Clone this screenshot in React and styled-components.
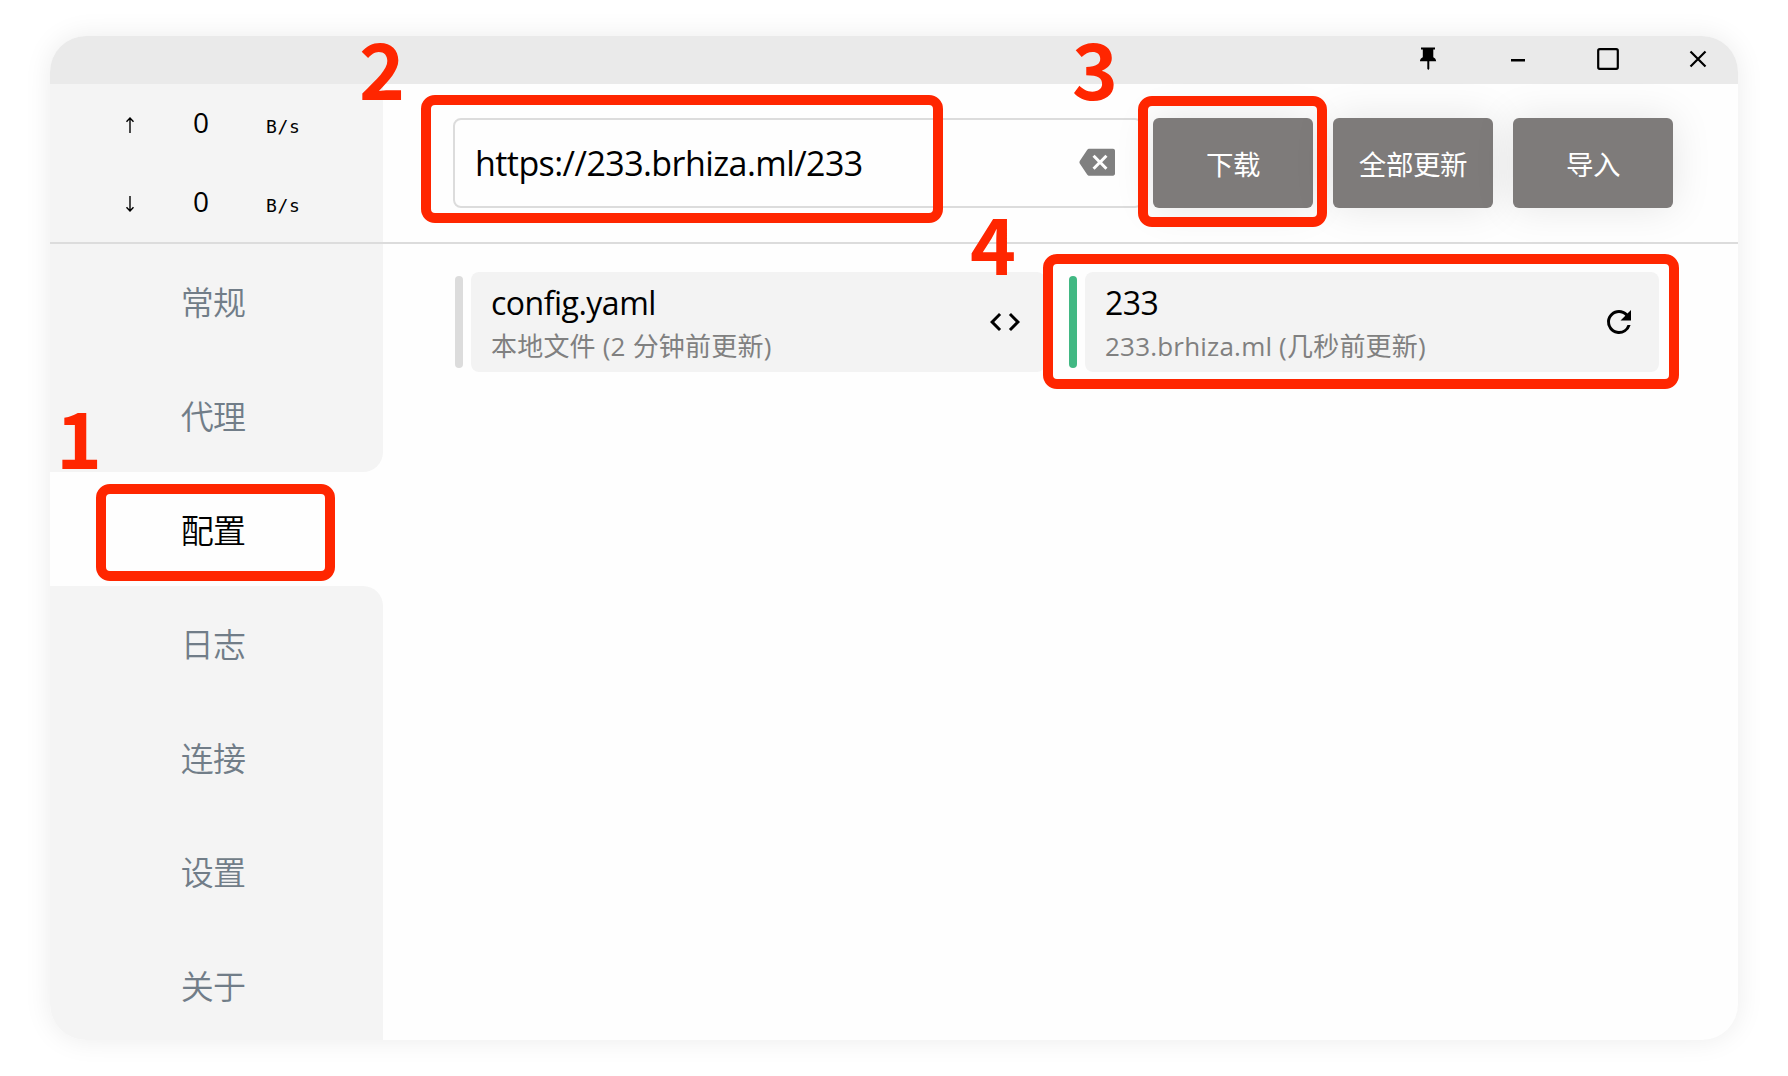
import React from "react";
import styled, { createGlobalStyle, css } from "styled-components";

const sans = `"Open Sans", "Noto Sans CJK SC", sans-serif`;
const mono = `"DejaVu Sans Mono", monospace`;

const GlobalStyle = createGlobalStyle`
  *, *::before, *::after { box-sizing: border-box; }
  html, body { margin: 0; padding: 0; background: #fff; overflow: hidden; }
  button, input { font: inherit; border: 0; padding: 0; }
`;

const Stage = styled.main`
  position: relative;
  width: 1788px;
  height: 1076px;
  padding: 36px 50px;
  background: #fff;
  font-family: ${sans};
  color: #000;
  overflow: hidden;
`;

const Window = styled.section`
  display: flex;
  flex-direction: column;
  width: 1688px;
  height: 1004px;
  border-radius: 36px;
  background: #fefefe;
  overflow: hidden;
  box-shadow: 0 0 28px rgba(0, 0, 0, 0.08);
`;

const TitleBar = styled.header`
  display: flex;
  flex: none;
  justify-content: flex-end;
  gap: 10px;
  height: 48px;
  padding-bottom: 2px;
  background: #eaeaea;
`;

const WindowButton = styled.button`
  display: grid;
  place-items: center;
  width: 80px;
  height: 100%;
  background: none;
`;

const Top = styled.div`
  display: flex;
  flex: none;
  height: 160px;
  border-bottom: 2px solid #dcdcdc;
`;

const Traffic = styled.div`
  display: grid;
  grid-template-rows: 79px 79px;
  width: 333px;
  background: #f4f4f4;
`;

const TrafficRow = styled.div`
  display: grid;
  grid-template-columns: 20px 24px 60px;
  column-gap: 49px;
  align-items: baseline;
  padding: 18px 0 0 70px;
  line-height: 40px;
`;

const Arrow = styled.svg`
  width: 20px;
  height: 16px;
  transform: ${(p) => (p.$down ? "rotate(180deg)" : "none")};
`;

const Amount = styled.span`
  font-size: 28px;
  text-align: center;
`;

const Unit = styled.span`
  padding-left: 4px;
  font-family: ${mono};
  font-size: 18px;
  letter-spacing: 0.7px;
`;

const Toolbar = styled.div`
  display: flex;
  flex: 1;
  gap: 20px;
  padding: 34px 65px 34px 70px;
`;

const UrlField = styled.div`
  display: flex;
  align-items: center;
  width: 690px;
  height: 90px;
  margin-right: -10px;
  padding: 0 26px 0 20px;
  border: 2px solid #dcdcdc;
  border-radius: 8px;
`;

const Url = styled.span`
  flex: 1;
  font-size: 34px;
  letter-spacing: -0.57px;
  white-space: nowrap;
`;

const ActionButton = styled.button`
  flex: none;
  width: 160px;
  height: 90px;
  padding-top: 3px;
  border-radius: 6px;
  background: #7e7b7a;
  color: #fff;
  font-size: 27.5px;
  letter-spacing: -0.4px;
  line-height: 87px;
  box-shadow: 0 0 40px rgba(0, 0, 0, 0.1);
`;

const Body = styled.div`
  display: flex;
  flex: 1;
  min-height: 0;
`;

const Nav = styled.nav`
  display: flex;
  flex-direction: column;
  flex: none;
  width: 333px;
`;

const NavItem = styled.a`
  display: flex;
  flex: none;
  align-items: center;
  justify-content: center;
  height: 114px;
  padding: 0 7px 0 0;
  font-size: 33px;
  letter-spacing: -0.8px;
  font-weight: 350;
  color: #717d88;
  background: #f4f4f4;
  ${(p) => p.$edge === "before" && css`border-bottom-right-radius: 20px;`}
  ${(p) => p.$edge === "after" && css`border-top-right-radius: 20px;`}
  ${(p) =>
    p.$active &&
    css`
      color: #000;
      background: #fefefe;
    `}
`;

const Profiles = styled.div`
  display: grid;
  grid-template-columns: 590px 590px;
  grid-auto-rows: 100px;
  column-gap: 24px;
  padding: 28px 0 0 72px;
`;

const Profile = styled.article`
  display: flex;
  align-items: center;
  gap: 8px;
`;

const Marker = styled.i`
  width: 8px;
  height: 92px;
  border-radius: 4px;
  background: ${(p) => (p.$on ? "#41b883" : "#dcdcdc")};
`;

const Card = styled.div`
  display: flex;
  align-items: center;
  justify-content: space-between;
  width: 574px;
  height: 100px;
  padding: 0 22px 0 20px;
  border-radius: 8px;
  background: #f3f3f3;
`;

const Texts = styled.div`
  padding-top: 3px;
  white-space: nowrap;
`;

const Name = styled.div`
  font-size: 32px;
  line-height: 44px;
  letter-spacing: -0.5px;
`;

const Detail = styled.div`
  font-size: 26px;
  line-height: 42px;
  color: #808080;
  letter-spacing: 0.2px;
`;

const Icon = styled.svg`
  flex: none;
  display: block;
  width: ${(p) => p.$size}px;
  height: ${(p) => p.$size}px;
`;

const Frame = styled.div`
  position: absolute;
  left: ${(p) => p.$x}px;
  top: ${(p) => p.$y}px;
  width: ${(p) => p.$w}px;
  height: ${(p) => p.$h}px;
  border: 10px solid #ff2600;
  border-radius: 14px;
  pointer-events: none;
`;

const Step = styled.span`
  position: absolute;
  left: ${(p) => p.$x}px;
  top: ${(p) => p.$y}px;
  font-family: "Noto Sans CJK SC", sans-serif;
  font-size: 78px;
  font-weight: 700;
  line-height: 78px;
  color: #ff2600;
`;

const PinIcon = () => (
  <Icon $size={24} viewBox="0 0 24 24">
    <path d="M5 .5h14v2h-1.700v7.700c1.700.8 2.700 2 2.900 4.100h-6.900v7.400l-1 1.300-1-1.300v-7.400H3.900c.2-2.100 1.200-3.300 2.900-4.100V2.500H5z" />
  </Icon>
);

const MinimizeIcon = () => (
  <Icon $size={24} viewBox="0 0 24 24">
    <path d="M5 12h14v2.500H5z" />
  </Icon>
);

const MaximizeIcon = () => (
  <Icon $size={24} viewBox="0 0 24 24" fill="none" stroke="#000" strokeWidth="2.2">
    <rect x="2.200" y="2.200" width="19.600" height="19.600" rx="1.500" />
  </Icon>
);

const CloseIcon = () => (
  <Icon $size={24} viewBox="0 0 24 24" fill="none" stroke="#000" strokeWidth="2.2">
    <path d="M4.500 4.500l15 15M19.500 4.500l-15 15" />
  </Icon>
);

const BackspaceIcon = () => (
  <Icon $size={36} viewBox="0 0 24 24" fill="#808080">
    <path d="M22.700 2.500H7c-.69 0-1.230.350-1.590.880L.5 10.700q-.5.800 0 1.600l4.910 7.310c.360.530.900.890 1.590.890h15.700c.700 0 1.300-.600 1.300-1.300V3.800c0-.700-.600-1.300-1.300-1.300zM19 15.090 17.590 16.500 14 12.910 10.410 16.500 9 15.090 12.590 11.500 9 7.910 10.410 6.500 14 10.090 17.590 6.500 19 7.910 15.410 11.500z" />
  </Icon>
);

const CodeIcon = () => (
  <Icon $size={36} viewBox="0 0 24 24">
    <path d="M9.400 16.600 4.800 12l4.600-4.600L8 6l-6 6 6 6zm5.200 0 4.600-4.600-4.600-4.600L16 6l6 6-6 6z" />
  </Icon>
);

const RefreshIcon = () => (
  <Icon $size={36} viewBox="0 0 24 24">
    <path d="M17.650 6.350A7.958 7.958 0 0 0 12 4a8 8 0 1 0 7.730 10h-2.080A5.990 5.990 0 0 1 12 18c-3.310 0-6-2.690-6-6s2.690-6 6-6c1.660 0 3.140.690 4.220 1.780L13 11h7V4z" />
  </Icon>
);

const SpeedArrow = ({ down }) => (
  <Arrow $down={down} viewBox="0 0 20 16" fill="none" stroke="#000" strokeWidth="1.400">
    <path d="M10 16V1M6.500 4.800 10 1l3.500 3.800" />
  </Arrow>
);

const navItems = ["常规", "代理", "配置", "日志", "连接", "设置", "关于"];
const activeIndex = 2;
const edgeOf = (i) =>
  i === activeIndex - 1 ? "before" : i === activeIndex + 1 ? "after" : undefined;

const frames = [
  { x: 96, y: 484, w: 239, h: 97 },
  { x: 421, y: 95, w: 522, h: 128 },
  { x: 1138, y: 96, w: 189, h: 131 },
  { x: 1043, y: 254, w: 636, h: 135 },
];

const steps = [
  { n: 1, x: 56, y: 396 },
  { n: 2, x: 359, y: 27 },
  { n: 3, x: 1072, y: 27 },
  { n: 4, x: 970, y: 202 },
];

export default function App() {
  return (
    <>
      <GlobalStyle />
      <Stage>
        <Window>
          <TitleBar>
            <WindowButton><PinIcon /></WindowButton>
            <WindowButton><MinimizeIcon /></WindowButton>
            <WindowButton><MaximizeIcon /></WindowButton>
            <WindowButton><CloseIcon /></WindowButton>
          </TitleBar>
          <Top>
            <Traffic>
              {[false, true].map((down) => (
                <TrafficRow key={String(down)}>
                  <SpeedArrow down={down} />
                  <Amount>0</Amount>
                  <Unit>B/s</Unit>
                </TrafficRow>
              ))}
            </Traffic>
            <Toolbar>
              <UrlField>
                <Url>https://233.brhiza.ml/233</Url>
                <BackspaceIcon />
              </UrlField>
              <ActionButton>下载</ActionButton>
              <ActionButton>全部更新</ActionButton>
              <ActionButton>导入</ActionButton>
            </Toolbar>
          </Top>
          <Body>
            <Nav>
              {navItems.map((label, i) => (
                <NavItem key={label} $active={i === activeIndex} $edge={edgeOf(i)}>
                  {label}
                </NavItem>
              ))}
            </Nav>
            <Profiles>
              <Profile>
                <Marker />
                <Card>
                  <Texts>
                    <Name>config.yaml</Name>
                    <Detail>本地文件 (2 分钟前更新)</Detail>
                  </Texts>
                  <CodeIcon />
                </Card>
              </Profile>
              <Profile>
                <Marker $on />
                <Card>
                  <Texts>
                    <Name>233</Name>
                    <Detail>233.brhiza.ml (几秒前更新)</Detail>
                  </Texts>
                  <RefreshIcon />
                </Card>
              </Profile>
            </Profiles>
          </Body>
        </Window>
        {frames.map((f) => (
          <Frame key={f.x} $x={f.x} $y={f.y} $w={f.w} $h={f.h} />
        ))}
        {steps.map((s) => (
          <Step key={s.n} $x={s.x} $y={s.y}>{s.n}</Step>
        ))}
      </Stage>
    </>
  );
}
